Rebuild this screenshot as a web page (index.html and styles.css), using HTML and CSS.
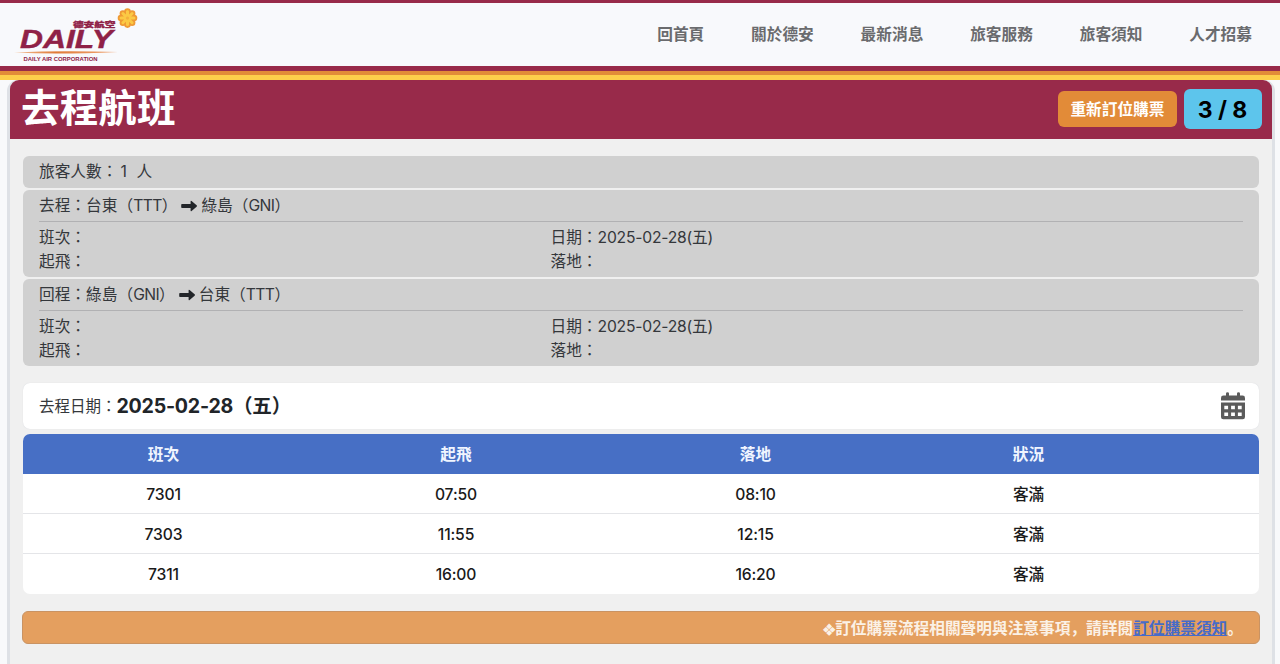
FILE: index.html
```
<!DOCTYPE html>
<html lang="zh-Hant">
<head>
    <meta charset="UTF-8">
    <title>德安航空 - 去程航班</title>
    <link rel="stylesheet" href="styles.css">
</head>
<body>

<header class="header">
    <a class="logo">
        <svg width="130" height="60" viewBox="0 0 130 60">
            <defs>
                <linearGradient id="swoosh">
                    <stop offset="0" stop-color="#f3c29a"/>
                    <stop offset="0.4" stop-color="#e07a38"/>
                    <stop offset="1" stop-color="#f0a878"/>
                </linearGradient>
            </defs>
            <text class="logo-cn" x="63" y="21.8" textLength="42.5" lengthAdjust="spacingAndGlyphs">德安航空</text>
            <text class="logo-en" x="10" y="43.4" textLength="93" lengthAdjust="spacingAndGlyphs">DAILY</text>
            <path d="M4 47.6Q50 45.2 108 47Q50 49.8 4 47.6z" fill="url(#swoosh)"/>
            <text class="logo-sub" x="13.5" y="55.7" textLength="74" lengthAdjust="spacingAndGlyphs">DAILY AIR CORPORATION</text>
            <!-- 花 -->
            <g fill="#ef9a35">
                <circle cx="117.5" cy="6.6" r="3.3"/>
                <circle cx="122.1" cy="8.5" r="3.3"/>
                <circle cx="124" cy="13.1" r="3.3"/>
                <circle cx="122.1" cy="17.7" r="3.3"/>
                <circle cx="117.5" cy="19.6" r="3.3"/>
                <circle cx="112.9" cy="17.7" r="3.3"/>
                <circle cx="111" cy="13.1" r="3.3"/>
                <circle cx="112.9" cy="8.5" r="3.3"/>
                <circle cx="117.5" cy="13.1" r="6"/>
            </g>
            <path d="M117.5 6.6v13M111 13.1h13M112.9 8.5l9.2 9.2M122.1 8.5l-9.2 9.2" stroke="#fbc944" stroke-width="3" stroke-linecap="round"/>
            <circle cx="117.5" cy="13.1" r="1.6" fill="#f5b03c"/>
        </svg>
    </a>
    <nav class="nav">
        <a>回首頁</a>
        <a>關於德安</a>
        <a>最新消息</a>
        <a>旅客服務</a>
        <a>旅客須知</a>
        <a>人才招募</a>
    </nav>
</header>
<div class="stripe"></div>

<main class="card">
    <div class="card-header">
        <h1>去程航班</h1>
        <div class="tools">
            <a class="btn">重新訂位購票</a>
            <span class="step">3 / 8</span>
        </div>
    </div>
    <div class="card-body">
        <div class="info info-people">旅客人數：<span class="num">1</span>人</div>
        <div class="info">
            <div class="route">去程：台東（<span class="code">TTT</span>）<svg class="arrow" viewBox="0 0 16 12"><path d="M1 4h8.600V1.400q0-1.200 1-.4l5 4.300q.8.700 0 1.400l-5 4.300q-1 .8-1-.4V8H1Q.2 8 .2 7.200V4.800Q.2 4 1 4z"/></svg>綠島（<span class="code">GNI</span>）</div>
            <div class="detail">
                <span>班次：</span><span>日期：<span class="day">2025-02-28(五)</span></span>
                <span>起飛：</span><span>落地：</span>
            </div>
        </div>
        <div class="info">
            <div class="route">回程：綠島（<span class="code">GNI</span>）<svg class="arrow" viewBox="0 0 16 12"><path d="M1 4h8.600V1.400q0-1.200 1-.4l5 4.300q.8.700 0 1.400l-5 4.300q-1 .8-1-.4V8H1Q.2 8 .2 7.200V4.800Q.2 4 1 4z"/></svg>台東（<span class="code">TTT</span>）</div>
            <div class="detail">
                <span>班次：</span><span>日期：<span class="day">2025-02-28(五)</span></span>
                <span>起飛：</span><span>落地：</span>
            </div>
        </div>

        <div class="date">
            <span>去程日期：</span><b>2025-02-28（五）</b>
            <svg class="calendar" viewBox="0 0 24 28">
                <path fill-rule="evenodd" d="M0 8.4V6Q0 3.6 2.4 3.6H5V1.4Q5 0.3 6.5 0.3T8 1.4V3.6H16V1.4Q16 0.3 17.5 0.3T19 1.4V3.6H21.6Q24 3.6 24 6V8.4zM0 10.4H24V25Q24 27.3 21.7 27.3H2.3Q0 27.3 0 25zM3.3 13.7v3.6h3.8v-3.6zM10.1 13.7v3.6h3.8v-3.6zM16.9 13.7v3.6h3.8v-3.6zM3.3 20.5v3.6h3.8v-3.6zM10.1 20.5v3.6h3.8v-3.6zM16.9 20.5v3.6h3.8v-3.6z"/>
            </svg>
        </div>

        <table class="flights">
            <colgroup>
                <col class="c1"><col class="c2"><col class="c3"><col class="c4"><col>
            </colgroup>
            <thead>
                <tr><th>班次</th><th>起飛</th><th>落地</th><th>狀況</th><th></th></tr>
            </thead>
            <tbody>
                <tr><td>7301</td><td>07:50</td><td>08:10</td><td>客滿</td><td></td></tr>
                <tr><td>7303</td><td>11:55</td><td>12:15</td><td>客滿</td><td></td></tr>
                <tr><td>7311</td><td>16:00</td><td>16:20</td><td>客滿</td><td></td></tr>
            </tbody>
        </table>

        <div class="note" lang="ja"><span class="mark">❖</span>訂位購票流程相關聲明與注意事項，請詳閱<a>訂位購票須知</a>。</div>
    </div>
</main>

</body>
</html>
```

FILE: styles.css
```
* {
    box-sizing: border-box;
    margin: 0;
    padding: 0;
}

body {
    height: 664px;
    overflow: hidden;
    display: flex;
    flex-direction: column;
    background: #f8f9fb;
    color: #34373b;
    font: 15.7px/23.5px Inter, "Noto Sans CJK TC", sans-serif;
}

/* 頁首 */
.header {
    height: 66px;
    flex: none;
    border-top: 3px solid #982a4a;
    background: #f8f9fc;
    display: flex;
    justify-content: space-between;
    padding: 2px 28px 0 10px;
}

.logo-cn,
.logo-en,
.logo-sub {
    fill: #8f2147;
    font-weight: 900;
}

.logo-cn {
    font-size: 7px;
    stroke: #8f2147;
    stroke-width: .3px;
}

.logo-en {
    font-family: "Liberation Sans", sans-serif;
    font-size: 25px;
    font-weight: bold;
    font-style: italic;
    stroke: #8f2147;
    stroke-width: .4px;
}

.logo-sub {
    font-family: "Liberation Sans", sans-serif;
    font-size: 5.2px;
    font-weight: bold;
}

.nav {
    display: flex;
    gap: 46.8px;
    padding-top: 18px;
    color: #6a6b6e;
    font-weight: bold;
}

.stripe {
    height: 14px;
    flex: none;
    background: linear-gradient(#982a4a 4.8px, #e28b38 4.8px, #e28b38 9.5px, #fdce4b 9.5px);
}

/* 卡片 */
.card {
    flex: 1;
    margin: 0 5px 0 7px;
    border: solid #dee1e6;
    border-width: 0 3px;
    border-radius: 11px 11px 0 0;
    background: #f0f0f0;
}

.card-header {
    height: 59.4px;
    border-radius: 9px 9px 0 0;
    background: #982a4a;
    display: flex;
    justify-content: space-between;
    padding: 0 10.5px 0 11px;
}

.card-header h1 {
    color: #fff;
    font-size: 38.7px;
    line-height: 57px;
}

.tools {
    display: flex;
    align-items: center;
    gap: 7px;
    height: 58px;
}

.btn {
    height: 36px;
    padding: 0 12px;
    border-radius: 6px;
    background: #e28b38;
    color: #fff;
    font-weight: bold;
    line-height: 37px;
}

.step {
    width: 78px;
    height: 40px;
    border-radius: 6px;
    background: #5dc5ec;
    color: #000;
    font-size: 23px;
    font-weight: bold;
    line-height: 42px;
    text-align: center;
}

.card-body {
    padding: 16.6px 13px 0;
}

.info {
    border-radius: 6px;
    background: #d0d0d0;
    margin-bottom: 2px;
    padding: 4px 16px;
    height: 87px;
}

.info-people {
    height: 32px;
}

.num {
    display: inline-block;
    width: 19px;
    padding-left: 3px;
}

.code {
    letter-spacing: -.6px;
}

.day {
    letter-spacing: -.22px;
}

.route {
    height: 28px;
    border-bottom: 1px solid #b1b1b3;
}

.arrow {
    width: 16px;
    height: 12px;
    margin: 0 4px;
    vertical-align: -1px;
    fill: #222529;
}

.detail {
    display: grid;
    grid-template-columns: 511.5px 1fr;
    padding-top: 4.5px;
}

.date {
    height: 46px;
    margin: 17px 0 5.5px;
    padding: 1px 14px 0 16px;
    border-radius: 7px;
    background: #fff;
    box-shadow: 0 0 1px #cfd2d8;
    display: flex;
    align-items: center;
}

.date span {
    font-size: 15.5px;
}

.date b {
    color: #212529;
    font-size: 19.6px;
    letter-spacing: -.25px;
}

.calendar {
    width: 24px;
    height: 28px;
    margin: -1px 0 0 auto;
    fill: #5b5b5b;
}

/* 航班表 */
.flights {
    width: 100%;
    table-layout: fixed;
    border-collapse: separate;
    border-spacing: 0;
    border-radius: 7px;
    overflow: hidden;
    background: #fff;
    color: #1a1a1a;
    text-align: center;
}

.flights tr {
    height: 40px;
}

.flights th {
    background: #476fc5;
    color: #f0f5ff;
}

.flights td {
    padding-top: 1px;
    border-bottom: 1px solid #e4e5e8;
    font-weight: 500;
    letter-spacing: -.15px;
}

.flights tr:last-child td {
    border-bottom: 0;
}

.c1 { width: 281px; }
.c2 { width: 304px; }
.c3 { width: 295px; }
.c4 { width: 251px; }

.note {
    height: 33px;
    margin: 16.5px -1px 0;
    padding-right: 16px;
    border: 1px solid #c99363;
    border-radius: 6px;
    background: #e49f5f;
    color: #fbf1e6;
    font-family: "Noto Sans CJK JP", sans-serif;
    font-weight: bold;
    line-height: 31px;
    text-align: right;
}

.note .mark {
    display: inline-block;
    width: 11.5px;
    font-size: 11px;
    text-align: left;
    -webkit-text-stroke: 1.2px #fbf1e6;
}

.note a {
    color: #476bc8;
    text-decoration: underline;
}
```
